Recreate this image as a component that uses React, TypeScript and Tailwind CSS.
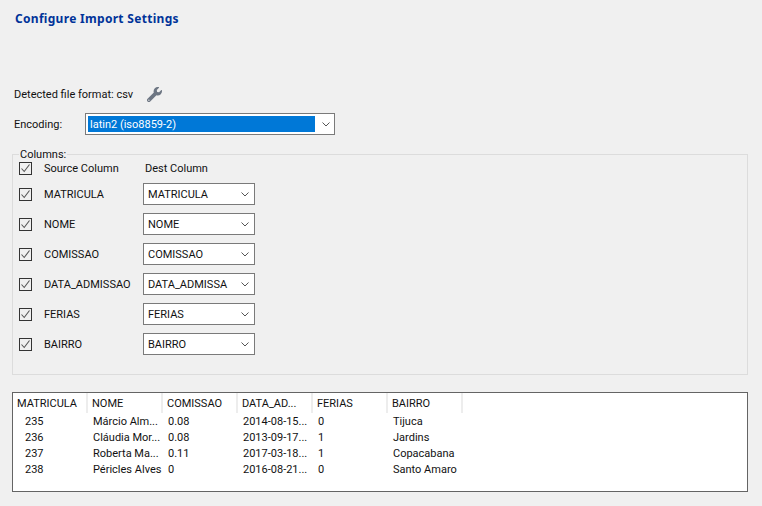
import { FaWrench } from "react-icons/fa";

const columns = ["MATRICULA", "NOME", "COMISSAO", "DATA_ADMISSAO", "FERIAS", "BAIRRO"];
const destLabels = ["MATRICULA", "NOME", "COMISSAO", "DATA_ADMISSA", "FERIAS", "BAIRRO"];
const headers = ["MATRICULA", "NOME", "COMISSAO", "DATA_AD...", "FERIAS", "BAIRRO"];
const rows = [
  ["235", "Márcio Alm...", "0.08", "2014-08-15...", "0", "Tijuca"],
  ["236", "Cláudia Mor...", "0.08", "2013-09-17...", "1", "Jardins"],
  ["237", "Roberta Ma...", "0.11", "2017-03-18...", "1", "Copacabana"],
  ["238", "Péricles Alves", "0", "2016-08-21...", "0", "Santo Amaro"],
];

function Chevron() {
  return (
    <svg width="8" height="5" viewBox="0 0 8 5" fill="none" className="shrink-0">
      <path d="M0.5 0.5L4 4L7.5 0.5" stroke="#555555" strokeWidth="1" />
    </svg>
  );
}

function Check() {
  return (
    <div className="w-[13px] h-[13px] border border-[#333333] bg-[#f0f0f0] flex items-center justify-center shrink-0">
      <svg width="11" height="11" viewBox="0 0 11 11" fill="none">
        <path d="M1.5 5.5L4.2 8.5L9.5 1.5" stroke="#555555" strokeWidth="1.1" />
      </svg>
    </div>
  );
}

function DestSelect({ label }: { label: string }) {
  return (
    <div className="w-[112px] h-[22px] border border-[#7a7a7a] bg-white flex items-center justify-between pl-[4px] pr-[5px]">
      <span className="pt-[2px]">{label}</span>
      <Chevron />
    </div>
  );
}

export default function App() {
  return (
    <div className="w-[762px] h-[506px] bg-[#f0f0f0] text-[#111111] text-[11px] leading-[14px] font-['Roboto',sans-serif] overflow-hidden px-[12px]">
      <h1 className="pt-[11px] pl-[3px] text-[12px] leading-[16px] font-bold text-[#003399] font-['Noto_Sans',sans-serif] tracking-[0.3px]">Configure Import Settings</h1>

      <div className="mt-[59px] flex items-center h-[17px] pl-[2px]">
        <span className="w-[133px]">Detected file format: csv</span>
        <FaWrench className="text-[#6d7683]" size={15} />
      </div>

      <div className="mt-[10px] flex items-center pl-[2px]">
        <span className="w-[71px] pt-[2px]">Encoding:</span>
        <div className="w-[250px] h-[22px] border border-[#7a7a7a] bg-white flex items-center p-[2px] pr-[4px]">
          <div className="w-[227px] h-[16px] bg-[#0078d7] text-white pl-[2px] pt-[2px] flex items-center">latin2 (iso8859-2)</div>
          <div className="ml-auto"><Chevron /></div>
        </div>
      </div>

      <fieldset className="mt-[11px] w-[736px] h-[229px] border border-[#dcdcdc] pl-[6px]">
        <legend className="px-[1px] pt-[2px] leading-[14px]">Columns:</legend>
        <div className="flex items-center h-[16px] -mt-[2px]">
          <Check />
          <span className="ml-[12px] w-[101px] pt-[2px]">Source Column</span>
          <span className="pt-[2px]">Dest Column</span>
        </div>
        <div className="mt-[7px] flex flex-col gap-[8px]">
          {columns.map((c, i) => (
            <div key={c} className="flex items-center">
              <Check />
              <span className="ml-[12px] w-[99px] pt-[2px]">{c}</span>
              <DestSelect label={destLabels[i]} />
            </div>
          ))}
        </div>
      </fieldset>

      <div className="mt-[17px] w-[736px] h-[100px] border border-[#646464] bg-white">
        <div className="flex h-[20px]">
          {headers.map((h) => (
            <div key={h} className="w-[75px] h-[20px] border-r-2 border-[#ededed] pl-[4px] pt-[2px] flex items-center">{h}</div>
          ))}
        </div>
        {rows.map((r) => (
          <div key={r[0]} className="flex h-[16px] items-center">
            {r.map((v, i) => (
              <div key={i} className={`w-[75px] whitespace-nowrap pt-[2px] ${i === 0 ? "pl-[12px]" : "pl-[5px]"}`}>{v}</div>
            ))}
          </div>
        ))}
      </div>
    </div>
  );
}
